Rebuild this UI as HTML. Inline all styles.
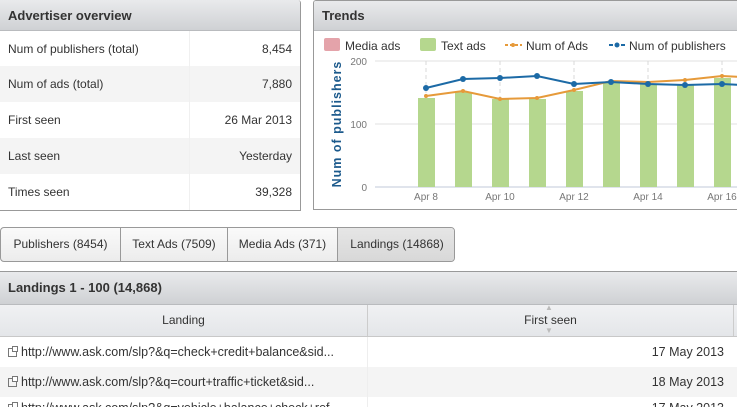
<!DOCTYPE html><html><head><style>
body{margin:0;width:737px;height:407px;overflow:hidden;background:#fff;font-family:"Liberation Sans",sans-serif;font-size:12px;color:#333;position:relative}
.a{position:absolute}
.hd{background:linear-gradient(#e9eaec,#cfd1d4);font-weight:bold;font-size:13px;color:#333;box-sizing:border-box;padding-left:8px;border-bottom:1px solid #b9bbbe}
.row{position:absolute;left:0;width:300px;height:36px;line-height:36px;box-sizing:border-box;padding:0 8px}
.row span{float:right}
.u{font-size:12.5px}
.ic{display:inline-block;width:9px;height:9px;border:1px solid #777;margin:0 4px 0 8px;position:relative;top:1px;box-sizing:border-box}
.ic:after{content:"";position:absolute;left:3px;top:-3px;width:6px;height:6px;border:1px solid #777;background:#fff;box-sizing:border-box}
</style></head><body>
<div class="a" style="left:0;top:0;width:300px;height:210px;border-right:1px solid #999;border-bottom:1px solid #999;border-top-right-radius:3px;overflow:hidden">
<div class="hd" style="height:31px;line-height:31px">Advertiser overview</div>
<div class="row" style="top:31px;background:#fff">Num of publishers (total)<span>8,454</span></div>
<div class="row" style="top:66px;background:#f4f4f4">Num of ads (total)<span>7,880</span></div>
<div class="row" style="top:102px;background:#fff">First seen<span>26 Mar 2013</span></div>
<div class="row" style="top:138px;background:#f4f4f4">Last seen<span>Yesterday</span></div>
<div class="row" style="top:174px;background:#fff">Times seen<span>39,328</span></div>
<div class="a" style="left:189px;top:31px;width:1px;height:180px;background:#f0f0f0"></div>
</div>
<div class="a" style="left:313px;top:0;width:430px;height:210px;border:1px solid #999;border-right:none;border-top-left-radius:3px;box-sizing:border-box;overflow:hidden">
<div class="hd" style="height:30px;line-height:30px">Trends</div>
</div>
<svg class="a" style="left:0;top:0" width="737" height="212" font-family="Liberation Sans, sans-serif">
<rect x="324" y="38" width="16" height="13" rx="2" fill="#e4a3aa"/>
<text x="345" y="50" font-size="12" fill="#333">Media ads</text>
<rect x="420" y="38" width="16" height="13" rx="2" fill="#b5d78e"/>
<text x="441" y="50" font-size="12" fill="#333">Text ads</text>
<line x1="505" y1="45" x2="522" y2="45" stroke="#e69a3a" stroke-width="2" stroke-dasharray="3,2"/><circle cx="513" cy="45" r="2" fill="#e69a3a"/>
<text x="526" y="50" font-size="12" fill="#333">Num of Ads</text>
<line x1="609" y1="45" x2="626" y2="45" stroke="#1c6aa6" stroke-width="2" stroke-dasharray="4,2"/><circle cx="617" cy="45" r="2.5" fill="#1c6aa6"/>
<text x="629" y="50" font-size="12" fill="#333">Num of publishers</text>
<g stroke="#e2e2e2"><line x1="375" y1="61" x2="737" y2="61"/><line x1="375" y1="124" x2="737" y2="124"/></g>
<line x1="375" y1="187" x2="737" y2="187" stroke="#c0c8d8"/>
<g stroke="#d8d8d8" stroke-dasharray="4,3"><line x1="426" y1="61" x2="426" y2="187"/><line x1="500" y1="61" x2="500" y2="187"/><line x1="574" y1="61" x2="574" y2="187"/><line x1="648" y1="61" x2="648" y2="187"/><line x1="722" y1="61" x2="722" y2="187"/></g>
<g font-size="10" fill="#777"><text x="367" y="65" text-anchor="end">200</text><text x="367" y="128" text-anchor="end">100</text><text x="367" y="191" text-anchor="end">0</text>
<text x="426" y="200" text-anchor="middle">Apr 8</text><text x="500" y="200" text-anchor="middle">Apr 10</text><text x="574" y="200" text-anchor="middle">Apr 12</text><text x="648" y="200" text-anchor="middle">Apr 14</text><text x="722" y="200" text-anchor="middle">Apr 16</text></g>
<text transform="translate(341,124) rotate(-90)" text-anchor="middle" font-size="12.5" font-weight="bold" fill="#1c5a8c" letter-spacing="1">Num of publishers</text>
<g fill="#b5d78e"><rect x="418" y="98" width="17" height="89"/><rect x="455" y="92" width="17" height="95"/><rect x="492" y="99" width="17" height="88"/><rect x="529" y="99" width="17" height="88"/><rect x="566" y="91" width="17" height="96"/><rect x="603" y="83" width="17" height="104"/><rect x="640" y="84" width="17" height="103"/><rect x="677" y="84" width="17" height="103"/><rect x="714" y="78" width="17" height="109"/></g>
<polyline fill="none" stroke="#e69a3a" stroke-width="2" points="426,96 463,91 500,99 537,98 574,90 611,81 648,82 685,80 722,76 759,78"/>
<g fill="#e69a3a"><circle cx="426" cy="96" r="2"/><circle cx="463" cy="91" r="2"/><circle cx="500" cy="99" r="2"/><circle cx="537" cy="98" r="2"/><circle cx="574" cy="90" r="2"/><circle cx="685" cy="80" r="2"/><circle cx="722" cy="76" r="2"/></g>
<polyline fill="none" stroke="#1c6aa6" stroke-width="2" points="426,88 463,79 500,78 537,76 574,84 611,82 648,84 685,85 722,84 759,86"/>
<g fill="#1c6aa6"><circle cx="426" cy="88" r="3"/><circle cx="463" cy="79" r="3"/><circle cx="500" cy="78" r="3"/><circle cx="537" cy="76" r="3"/><circle cx="574" cy="84" r="3"/><circle cx="611" cy="82" r="3"/><circle cx="648" cy="84" r="3"/><circle cx="685" cy="85" r="3"/><circle cx="722" cy="84" r="3"/></g>
</svg>
<div class="a" style="left:0;top:227px;width:455px;height:35px;border:1px solid #999;border-radius:4px;box-sizing:border-box;overflow:hidden;background:linear-gradient(#fafafa,#ececec);font-size:12px;line-height:33px">
<div class="a" style="left:0;width:119px;text-align:center;border-right:1px solid #999;height:33px">Publishers (8454)</div>
<div class="a" style="left:120px;width:106px;text-align:center;border-right:1px solid #999;height:33px">Text Ads (7509)</div>
<div class="a" style="left:227px;width:109px;text-align:center;border-right:1px solid #999;height:33px">Media Ads (371)</div>
<div class="a" style="left:337px;width:118px;text-align:center;height:33px;background:linear-gradient(#e6e6e6,#d8d8d8)">Landings (14868)</div>
</div>
<div class="a" style="left:0;top:271px;width:737px;height:136px;border-top:1px solid #999;box-sizing:border-box;overflow:hidden">
<div class="hd" style="height:33px;line-height:32px">Landings 1 - 100 (14,868)</div>
<div class="a" style="top:33px;left:0;width:737px;height:32px;background:linear-gradient(#f0f1f3,#e4e6e9);border-bottom:1px solid #c8c8c8;box-sizing:border-box;line-height:31px">
<div class="a" style="left:0;width:367px;text-align:center;border-right:1px solid #ccc;height:31px">Landing</div>
<div class="a" style="left:368px;width:365px;text-align:center;border-right:1px solid #ccc;height:31px">First seen</div>
<div class="a" style="left:545px;top:-1px;font-size:8px;color:#bbb;line-height:8px">&#9650;</div>
<div class="a" style="left:545px;top:22px;font-size:8px;color:#bbb;line-height:8px">&#9660;</div>
</div>
<div class="a u" style="top:65px;left:0;width:737px;height:30px;background:#fff;line-height:30px"><span class="ic"></span>http://www.ask.com/slp?&amp;q=check+credit+balance&amp;sid...<span class="a" style="right:13px">17 May 2013</span></div>
<div class="a u" style="top:95px;left:0;width:737px;height:30px;background:#f4f4f4;line-height:30px"><span class="ic"></span>http://www.ask.com/slp?&amp;q=court+traffic+ticket&amp;sid...<span class="a" style="right:13px">18 May 2013</span></div>
<div class="a u" style="top:125px;left:0;width:737px;height:30px;background:#fff;line-height:22px"><span class="ic"></span>http://www.ask.com/slp?&amp;q=vehicle+balance+check+ref...<span class="a" style="right:13px">17 May 2013</span></div>
<div class="a" style="left:367px;top:65px;width:1px;height:80px;background:#eee"></div>
</div>
</body></html>
